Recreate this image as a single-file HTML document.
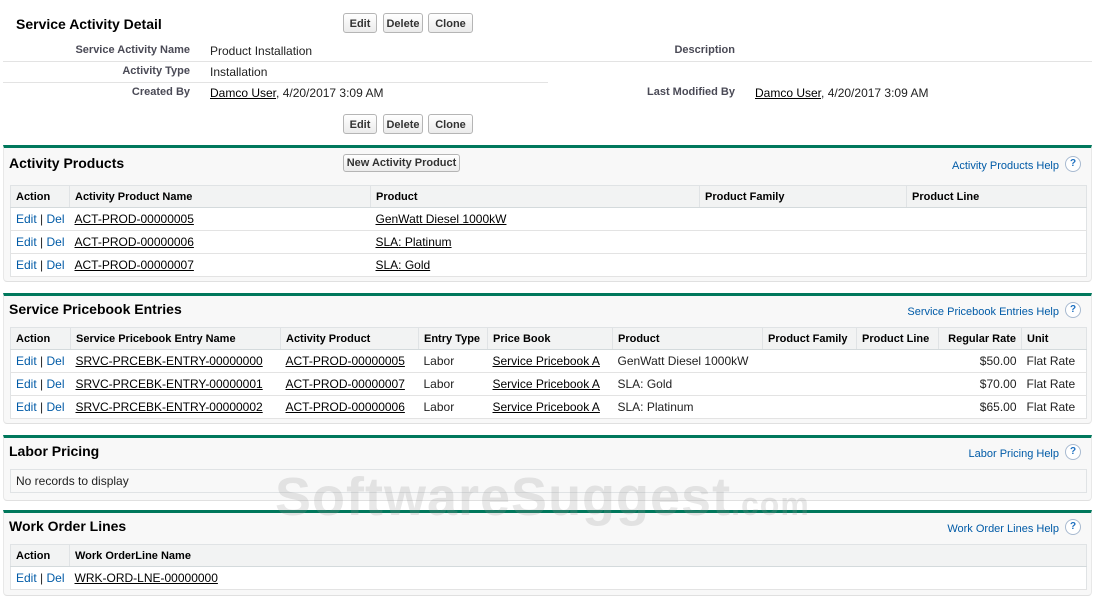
<!DOCTYPE html>
<html><head><style>
body{margin:0;width:1095px;height:598px;background:#fff;font-family:"Liberation Sans",Arial,sans-serif;font-size:12px;color:#222;position:relative;overflow:hidden}
.a{position:absolute;white-space:nowrap}
.btn{position:absolute;height:20px;line-height:20px;border:1px solid #b5b5b5;border-radius:3px;background:linear-gradient(#fff,#ebebeb);font-weight:bold;font-size:11px;color:#333;text-align:center;box-sizing:border-box}
.lbl{font-weight:bold;font-size:11px;color:#4a4a56;text-align:right}
u{color:#000}
.box{position:absolute;left:3px;width:1089px;background:#f8f8f8;border-top:3px solid #00785c;border-radius:0 0 4px 4px;border-bottom:1px solid #e0e0e0;border-left:1px solid #e8e8e8;border-right:1px solid #e8e8e8;box-sizing:border-box}
.h{position:absolute;left:5px;font-weight:bold;font-size:14px;color:#000}
.help{position:absolute;right:32px;color:#015ba7;font-size:11px}
.q{position:absolute;right:10px;width:14px;height:14px;border-radius:50%;background:#fff;border:1px solid #a8bad0;color:#1c6fc0;font-size:10px;font-weight:bold;text-align:center;line-height:14px}
table{position:absolute;left:6px;border-collapse:collapse;background:#fff;border:1px solid #e0e3e5;table-layout:fixed}
td,th{height:22px;padding:0 5px;border-bottom:1px solid #e3e3e3;text-align:left;white-space:nowrap;overflow:hidden}
th{height:21px;background:#f2f3f3;font-size:11px;font-weight:bold;color:#000;border-left:1px solid #e0e3e5;border-bottom:1px solid #d4dadc}
th:first-child{border-left:none}
td.ac{color:#015ba7}
td.ac span{color:#222}
.r{text-align:right}
</style></head><body>
<div class="a" style="left:16px;top:16px;font-weight:bold;font-size:14px;color:#000">Service Activity Detail</div>
<div class="btn" style="left:343px;top:13px;width:34px">Edit</div>
<div class="btn" style="left:383px;top:13px;width:40px">Delete</div>
<div class="btn" style="left:428px;top:13px;width:45px">Clone</div>
<div class="a lbl" style="left:40px;width:150px;top:44px">Service Activity Name</div>
<div class="a" style="left:210px;top:44px">Product Installation</div>
<div class="a lbl" style="left:600px;width:135px;top:44px">Description</div>
<div class="a" style="left:3px;top:61px;width:545px;border-top:1px solid #e3e3e3"></div>
<div class="a" style="left:548px;top:61px;width:544px;border-top:1px solid #e3e3e3"></div>
<div class="a lbl" style="left:40px;width:150px;top:65px">Activity Type</div>
<div class="a" style="left:210px;top:65px">Installation</div>
<div class="a" style="left:3px;top:82px;width:545px;border-top:1px solid #e3e3e3"></div>
<div class="a lbl" style="left:40px;width:150px;top:86px">Created By</div>
<div class="a" style="left:210px;top:86px"><u>Damco User</u>, 4/20/2017 3:09 AM</div>
<div class="a lbl" style="left:600px;width:135px;top:86px">Last Modified By</div>
<div class="a" style="left:755px;top:86px"><u>Damco User</u>, 4/20/2017 3:09 AM</div>
<div class="btn" style="left:343px;top:114px;width:34px">Edit</div>
<div class="btn" style="left:383px;top:114px;width:40px">Delete</div>
<div class="btn" style="left:428px;top:114px;width:45px">Clone</div>

<div class="box" style="top:145px;height:137px">
<div class="h" style="top:7px">Activity Products</div>
<div class="btn" style="left:339px;top:6px;width:117px;height:18px;line-height:16px">New Activity Product</div>
<div class="help" style="top:12px">Activity Products Help</div><div class="q" style="top:8px">?</div>
<table style="top:37px;width:1077px">
<colgroup><col style="width:59px"><col style="width:301px"><col style="width:329px"><col style="width:207px"><col></colgroup>
<tr><th>Action</th><th>Activity Product Name</th><th>Product</th><th>Product Family</th><th>Product Line</th></tr>
<tr><td class="ac">Edit <span>|</span> Del</td><td><u>ACT-PROD-00000005</u></td><td><u>GenWatt Diesel 1000kW</u></td><td></td><td></td></tr>
<tr><td class="ac">Edit <span>|</span> Del</td><td><u>ACT-PROD-00000006</u></td><td><u>SLA: Platinum</u></td><td></td><td></td></tr>
<tr><td class="ac">Edit <span>|</span> Del</td><td><u>ACT-PROD-00000007</u></td><td><u>SLA: Gold</u></td><td></td><td></td></tr>
</table></div>

<div class="box" style="top:293px;height:131px">
<div class="h" style="top:5px">Service Pricebook Entries</div>
<div class="help" style="top:10px">Service Pricebook Entries Help</div><div class="q" style="top:6px">?</div>
<table style="top:31px;width:1077px">
<colgroup><col style="width:60px"><col style="width:210px"><col style="width:138px"><col style="width:69px"><col style="width:125px"><col style="width:150px"><col style="width:94px"><col style="width:82px"><col style="width:83px"><col></colgroup>
<tr><th>Action</th><th>Service Pricebook Entry Name</th><th>Activity Product</th><th>Entry Type</th><th>Price Book</th><th>Product</th><th>Product Family</th><th>Product Line</th><th class="r">Regular Rate</th><th>Unit</th></tr>
<tr><td class="ac">Edit <span>|</span> Del</td><td><u>SRVC-PRCEBK-ENTRY-00000000</u></td><td><u>ACT-PROD-00000005</u></td><td>Labor</td><td><u>Service Pricebook A</u></td><td>GenWatt Diesel 1000kW</td><td></td><td></td><td class="r">$50.00</td><td>Flat Rate</td></tr>
<tr><td class="ac">Edit <span>|</span> Del</td><td><u>SRVC-PRCEBK-ENTRY-00000001</u></td><td><u>ACT-PROD-00000007</u></td><td>Labor</td><td><u>Service Pricebook A</u></td><td>SLA: Gold</td><td></td><td></td><td class="r">$70.00</td><td>Flat Rate</td></tr>
<tr><td class="ac">Edit <span>|</span> Del</td><td><u>SRVC-PRCEBK-ENTRY-00000002</u></td><td><u>ACT-PROD-00000006</u></td><td>Labor</td><td><u>Service Pricebook A</u></td><td>SLA: Platinum</td><td></td><td></td><td class="r">$65.00</td><td>Flat Rate</td></tr>
</table></div>

<div class="box" style="top:435px;height:66px">
<div class="h" style="top:5px">Labor Pricing</div>
<div class="help" style="top:10px">Labor Pricing Help</div><div class="q" style="top:6px">?</div>
<table style="top:31px;width:1077px;background:#f8f8f8"><tr><td style="border:none">No records to display</td></tr></table>
</div>

<div class="box" style="top:510px;height:86px">
<div class="h" style="top:5px">Work Order Lines</div>
<div class="help" style="top:10px">Work Order Lines Help</div><div class="q" style="top:6px">?</div>
<table style="top:31px;width:1077px">
<colgroup><col style="width:59px"><col></colgroup>
<tr><th>Action</th><th>Work OrderLine Name</th></tr>
<tr><td class="ac">Edit <span>|</span> Del</td><td><u>WRK-ORD-LNE-00000000</u></td></tr>
</table></div>

<div class="a" style="left:275px;top:466px;font-size:54px;font-weight:bold;color:rgba(150,150,150,0.22);letter-spacing:1px">SoftwareSuggest<span style="font-size:32px">.com</span></div>
</body></html>
